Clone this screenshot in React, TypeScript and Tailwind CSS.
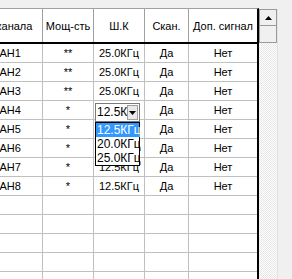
const rows = [
  { id: 'КАН1', power: '**', step: '25.0КГц' },
  { id: 'КАН2', power: '**', step: '25.0КГц' },
  { id: 'КАН3', power: '**', step: '25.0КГц' },
  { id: 'КАН4', power: '*', step: '12.5КГц', editing: true },
  { id: 'КАН5', power: '*', step: '12.5КГц' },
  { id: 'КАН6', power: '*', step: '12.5КГц' },
  { id: 'КАН7', power: '*', step: '12.5КГц' },
  { id: 'КАН8', power: '*', step: '12.5КГц' },
]

const options = ['12.5КГц', '20.0КГц', '25.0КГц']

function StepCombo() {
  return (
    <div className="absolute left-[1px] top-[2px] z-10">
      <div className="flex h-[19px] w-[45px] border border-[#7a7a7a] bg-white">
        <div className="flex-1 overflow-hidden whitespace-nowrap pl-[1px] text-left leading-[17px] text-[12px]">
          12.5КГц
        </div>
        <div className="my-[1px] mr-[1px] flex w-[11px] items-center justify-center border border-[#a0a0a0] bg-[#e9e9e9]">
          <svg width="7" height="4" viewBox="0 0 7 4">
            <path d="M0 0h7L3.5 4z" fill="#000" />
          </svg>
        </div>
      </div>
      <div className="flex w-[45px] flex-col border border-black bg-white text-left text-[12px]">
        {options.map((o, i) => (
          <div
            key={o}
            className={
              i === 0
                ? 'h-[14px] bg-[#3399ff] pl-[1px] leading-[14px] text-white'
                : 'h-[14px] pl-[1px] leading-[14px]'
            }
          >
            {o}
          </div>
        ))}
      </div>
    </div>
  )
}

function Row({ cells, editing }: { cells: string[]; editing?: boolean }) {
  return (
    <div className="flex h-[19px] border-b border-[#c0c0c0]">
      <div className="w-[71px] shrink-0 border-r border-[#c0c0c0] text-center leading-[18px]">
        {cells[0]}
      </div>
      <div className="w-[51px] shrink-0 border-r border-[#c0c0c0] text-center leading-[18px]">
        {cells[1]}
      </div>
      <div className="relative w-[51px] shrink-0 border-r border-[#c0c0c0] text-center leading-[18px]">
        {editing ? <StepCombo /> : cells[2]}
      </div>
      <div className="w-[44px] shrink-0 border-r border-[#c0c0c0] text-center leading-[18px]">
        {cells[3]}
      </div>
      <div className="w-[68px] shrink-0 text-center leading-[18px]">
        {cells[4]}
      </div>
    </div>
  )
}

export default function App() {
  const empty = ['', '', '', '', '']
  return (
    <div className="h-[279px] w-[292px] overflow-hidden bg-[#f0f0f0] font-['Liberation_Sans',Arial,sans-serif] text-[11px] text-black">
      <div className="h-[8px]" />
      <div className="flex">
        <div className="h-[271px] w-[259px] shrink-0 overflow-hidden border-t border-r-2 border-t-[#a0a0a0] border-r-black bg-white">
          <div className="ml-[-28px] w-[285px]">
            <div className="flex h-[35px] border-b-2 border-black">
              <div className="flex w-[71px] shrink-0 items-center justify-center border-r border-[#a0a0a0] pt-[2px]">
                № канала
              </div>
              <div className="flex w-[51px] shrink-0 items-center justify-center border-r border-[#a0a0a0] pt-[2px]">
                Мощ-сть
              </div>
              <div className="flex w-[51px] shrink-0 items-center justify-center border-r border-[#a0a0a0] pt-[2px]">
                Ш.К
              </div>
              <div className="flex w-[44px] shrink-0 items-center justify-center border-r border-[#a0a0a0] pt-[2px]">
                Скан.
              </div>
              <div className="flex w-[68px] shrink-0 items-center justify-center pt-[2px]">
                Доп. сигнал
              </div>
            </div>
            {rows.map((r) => (
              <Row
                key={r.id}
                cells={[r.id, r.power, r.step, 'Да', 'Нет']}
                editing={r.editing}
              />
            ))}
            {[0, 1, 2, 3, 4].map((i) => (
              <Row key={i} cells={empty} />
            ))}
          </div>
        </div>
        <div className="mt-[1px] flex h-[270px] w-[18px] shrink-0 flex-col bg-[repeating-conic-gradient(#ffffff_0%_25%,#e6e6e6_0%_50%)] bg-[length:2px_2px]">
          <div className="flex h-[17px] items-center justify-center border border-[#9a9a9a] bg-[#f0f0f0]">
            <svg width="7" height="4" viewBox="0 0 7 4">
              <path d="M3.5 0L7 4H0z" fill="#000" />
            </svg>
          </div>
          <div className="h-[17px] border border-t-0 border-[#9a9a9a] bg-[#f0f0f0]" />
        </div>
        <div className="mt-[1px] h-[270px] w-px bg-[#e2e2e2]" />
      </div>
    </div>
  )
}
